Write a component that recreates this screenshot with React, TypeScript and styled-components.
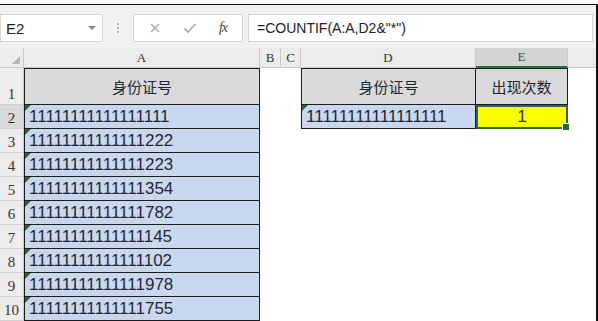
import { Fragment } from 'react';
import styled, { createGlobalStyle } from 'styled-components';

const GlobalStyle = createGlobalStyle`
  html, body {
    margin: 0;
    padding: 0;
    background: #ffffff;
  }
  * {
    box-sizing: border-box;
  }
`;

const Page = styled.div`
  width: 598px;
  height: 321px;
  padding-top: 4px;
  background: #ffffff;
  overflow: hidden;
`;

const Frame = styled.div`
  height: 317px;
  border-top: 1px solid #111;
  border-right: 2px solid #111;
  display: flex;
  flex-direction: column;
  background: #fdfdfd;
  overflow: hidden;
`;

const Toolbar = styled.div`
  display: flex;
  align-items: center;
  height: 43px;
  padding: 9px 3px 6px 0;
  background: #f1f1f1;
  font-family: 'Liberation Sans', Arial, sans-serif;
`;

const NameBox = styled.div`
  width: 103px;
  height: 28px;
  display: flex;
  align-items: center;
  justify-content: space-between;
  padding: 0 6px 0 5px;
  background: #ffffff;
  border: 1px solid #d6d6d6;
  font-size: 15px;
  color: #222;
`;

const Caret = styled.span`
  width: 0;
  height: 0;
  border-left: 4px solid transparent;
  border-right: 4px solid transparent;
  border-top: 4px solid #8a8a8a;
`;

const Dots = styled.div`
  width: 30px;
  display: flex;
  flex-direction: column;
  align-items: center;
  gap: 2px;
  span {
    width: 2px;
    height: 2px;
    background: #b5b5b5;
  }
`;

const Buttons = styled.div`
  width: 110px;
  height: 28px;
  display: flex;
  align-items: center;
  justify-content: space-around;
  padding: 0 4px;
  background: #ffffff;
  border: 1px solid #d6d6d6;
`;

const Fx = styled.span`
  font-family: 'Liberation Serif', 'Times New Roman', serif;
  font-style: italic;
  font-size: 14px;
  color: #444;
  letter-spacing: -1px;
`;

const FormulaBox = styled.div`
  flex: 1;
  margin-left: 5px;
  height: 28px;
  display: flex;
  align-items: center;
  padding-left: 8px;
  background: #ffffff;
  border: 1px solid #d6d6d6;
  font-size: 14px;
  color: #222;
`;

const Sheet = styled.div`
  display: grid;
  grid-template-columns: 24px 236px 21px 20px 175px 92px 1fr;
  grid-template-rows: 20px 37px repeat(9, 24px);
  background: #fdfdfd;
`;

const Corner = styled.div`
  position: relative;
  background: #ececec;
  border-right: 1px solid #c8c8c8;
  border-bottom: 1px solid #c8c8c8;
  &::after {
    content: '';
    position: absolute;
    right: 3px;
    bottom: 3px;
    border-left: 8px solid transparent;
    border-bottom: 8px solid #b8b8b8;
  }
`;

const ColHeader = styled.div<{ $active?: boolean }>`
  display: flex;
  align-items: center;
  justify-content: center;
  background: ${(p) => (p.$active ? '#d4d4d4' : '#ececec')};
  border-right: 1px solid #c8c8c8;
  border-bottom: ${(p) => (p.$active ? '2px solid #217346' : '1px solid #c8c8c8')};
  font-family: 'Liberation Serif', 'Times New Roman', serif;
  font-size: 13px;
  color: ${(p) => (p.$active ? '#2f5e3c' : '#333')};
`;

const HeaderFill = styled.div`
  background: #ececec;
  border-bottom: 1px solid #c8c8c8;
`;

const RowHeader = styled.div<{ $active?: boolean }>`
  display: flex;
  align-items: flex-end;
  justify-content: center;
  padding-bottom: 1px;
  background: ${(p) => (p.$active ? '#d9d9d9' : '#ececec')};
  border-right: 1px solid #c8c8c8;
  border-bottom: 1px solid #d0d0d0;
  font-family: 'Liberation Serif', 'Times New Roman', serif;
  font-size: 15px;
  color: #333;
`;

const Blank = styled.div`
  background: #ffffff;
`;

const Cell = styled.div<{
  $head?: boolean;
  $top?: boolean;
  $left?: boolean;
  $center?: boolean;
}>`
  position: relative;
  display: flex;
  align-items: center;
  justify-content: ${(p) => (p.$center ? 'center' : 'flex-start')};
  padding-left: ${(p) => (p.$center ? '0' : '4px')};
  background: ${(p) => (p.$head ? '#dadada' : '#c9d8ee')};
  border-right: 1px solid #1c1c1c;
  border-bottom: 1px solid #1c1c1c;
  border-top: ${(p) => (p.$top ? '1px solid #1c1c1c' : 'none')};
  border-left: ${(p) => (p.$left ? '1px solid #1c1c1c' : 'none')};
  font-family: ${(p) =>
    p.$head
      ? "'Noto Sans CJK SC', 'Liberation Sans', sans-serif"
      : "'Liberation Sans', Arial, sans-serif"};
  font-size: ${(p) => (p.$head ? '15px' : '17px')};
  color: #1e2733;
  white-space: nowrap;
`;

const TextCell = styled(Cell)`
  &::before {
    content: '';
    position: absolute;
    left: 0;
    top: 0;
    border-top: 6px solid #1f6b3a;
    border-right: 6px solid transparent;
  }
`;

const Selected = styled.div`
  position: relative;
  display: flex;
  align-items: center;
  justify-content: center;
  background: #ffff00;
  border: 2px solid #2a6a3a;
  font-family: 'Liberation Sans', Arial, sans-serif;
  font-size: 17px;
  color: #333;
  &::after {
    content: '';
    position: absolute;
    right: -4px;
    bottom: -4px;
    width: 6px;
    height: 6px;
    background: #2a6a3a;
    border: 1px solid #ffffff;
  }
`;

const ids = [
  '11111111111111111',
  '11111111111111222',
  '11111111111111223',
  '11111111111111354',
  '11111111111111782',
  '11111111111111145',
  '11111111111111102',
  '11111111111111978',
  '11111111111111755',
];

const XIcon = () => (
  <svg width="12" height="12" viewBox="0 0 12 12">
    <path d="M2 2 L10 10 M10 2 L2 10" stroke="#b0b0b0" strokeWidth="1.6" fill="none" />
  </svg>
);

const CheckIcon = () => (
  <svg width="14" height="12" viewBox="0 0 14 12">
    <path d="M1.5 6.5 L5 10 L12.5 2" stroke="#b0b0b0" strokeWidth="1.8" fill="none" />
  </svg>
);

export default function App() {
  return (
    <>
      <GlobalStyle />
      <Page>
        <Frame>
          <Toolbar>
            <NameBox>
              E2
              <Caret />
            </NameBox>
            <Dots>
              <span />
              <span />
              <span />
            </Dots>
            <Buttons>
              <XIcon />
              <CheckIcon />
              <Fx>fx</Fx>
            </Buttons>
            <FormulaBox>=COUNTIF(A:A,D2&amp;"*")</FormulaBox>
          </Toolbar>
          <Sheet>
            <Corner />
            <ColHeader>A</ColHeader>
            <ColHeader>B</ColHeader>
            <ColHeader>C</ColHeader>
            <ColHeader>D</ColHeader>
            <ColHeader $active>E</ColHeader>
            <HeaderFill />

            <RowHeader>1</RowHeader>
            <Cell $head $top $left $center>身份证号</Cell>
            <Blank />
            <Blank />
            <Cell $head $top $left $center>身份证号</Cell>
            <Cell $head $top $center>出现次数</Cell>
            <Blank />

            {ids.map((id, i) => (
              <Fragment key={id}>
                <RowHeader $active={i === 0}>{i + 2}</RowHeader>
                <TextCell $left>{id}</TextCell>
                <Blank />
                <Blank />
                {i === 0 ? (
                  <>
                    <TextCell $left>11111111111111111</TextCell>
                    <Selected>1</Selected>
                  </>
                ) : (
                  <>
                    <Blank />
                    <Blank />
                  </>
                )}
                <Blank />
              </Fragment>
            ))}
          </Sheet>
        </Frame>
      </Page>
    </>
  );
}
